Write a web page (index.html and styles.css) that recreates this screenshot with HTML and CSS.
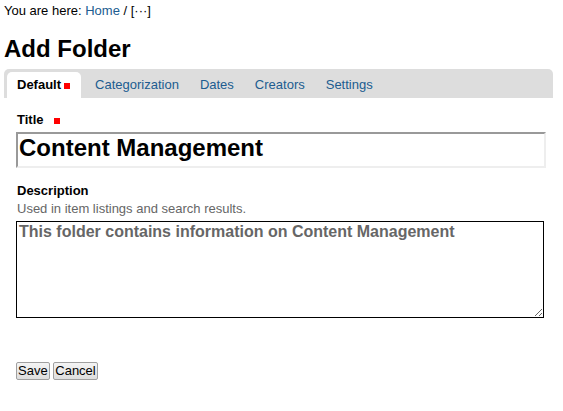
FILE: index.html
```html
<!DOCTYPE html>
<html lang="en">
<head>
    <meta charset="UTF-8">
    <meta name="viewport" content="width=device-width, initial-scale=1.0">
    <title>Add Folder</title>
    <link rel="stylesheet" href="styles.css">
</head>
<body>
    <div class="breadcrumbs">
        You are here: <a href="#">Home</a> / [&middot;&middot;&middot;]
    </div>

    <h1>Add Folder</h1>

    <ul class="tabs">
        <li class="tab active">Default<span class="required"></span></li>
        <li class="tab"><a href="#">Categorization</a></li>
        <li class="tab"><a href="#">Dates</a></li>
        <li class="tab"><a href="#">Creators</a></li>
        <li class="tab"><a href="#">Settings</a></li>
    </ul>

    <form class="edit-form">
        <div class="field">
            <label class="field-label" for="title">Title <span class="required"></span></label>
            <input type="text" id="title" class="title-input" value="Content Management">
        </div>

        <div class="field field-desc">
            <label class="field-label" for="description">Description</label>
            <div class="field-help">Used in item listings and search results.</div>
            <textarea id="description" class="desc-input">This folder contains information on Content Management</textarea>
        </div>

        <!-- Form buttons -->
        <div class="buttons">
            <button type="button">Save</button>
            <button type="button">Cancel</button>
        </div>
    </form>
</body>
</html>
```

FILE: styles.css
```css
body {
    font-family: "Liberation Sans", Arial, sans-serif;
    font-size: 13px;
    color: #000;
    margin: 0;
    padding: 2px 4px 0;
    background-color: #fff;
}
a {
    color: #205c90;
    text-decoration: none;
}
.breadcrumbs {
    line-height: 18px;
}
h1 {
    font-size: 24px;
    line-height: 28px;
    margin: 15px 0 6px;
}
.tabs {
    list-style: none;
    margin: 0 6px 0 0;
    padding: 3px 0 0 3px;
    height: 26px;
    background: #dddddd;
    border-radius: 5px 5px 0 0;
    display: flex;
}
.tab {
    line-height: 26px;
    padding: 0 10px;
    margin-right: 1px;
}
.tab.active {
    background: #fff;
    font-weight: bold;
    border-radius: 5px 5px 0 0;
    padding-right: 11px;
    margin-right: 4px;
}
.required {
    display: inline-block;
    width: 6px;
    height: 6px;
    background: #f00;
    margin-left: 3px;
    vertical-align: 0;
}
.edit-form {
    padding: 0 12px;
}
.field {
    margin-top: 14px;
}
.field-desc {
    margin-top: 15px;
}
.field-label {
    display: block;
    font-weight: bold;
    line-height: 16px;
    padding-left: 1px;
}
.field-label .required {
    margin-left: 7px;
}
.field-help {
    color: #666;
    line-height: 18px;
    margin-top: 1px;
    padding-left: 1px;
}
.title-input {
    display: block;
    box-sizing: border-box;
    width: 530px;
    height: 36px;
    margin-top: 4px;
    padding: 0 2px 4px 1px;
    border: 2px solid;
    border-color: #999 #eee #eee #999;
    font-family: "Liberation Sans", Arial, sans-serif;
    font-size: 24px;
    font-weight: bold;
    color: #000;
}
.desc-input {
    display: block;
    box-sizing: border-box;
    width: 528px;
    height: 97px;
    margin-top: 3px;
    padding: 1px 2px;
    border: 1px solid #000;
    font-family: "Liberation Sans", Arial, sans-serif;
    font-size: 16px;
    font-weight: bold;
    color: #666;
}
.buttons {
    margin-top: 44px;
}
button {
    font-family: "Liberation Sans", Arial, sans-serif;
    font-size: 13px;
    height: 18px;
    padding: 0 1px;
    margin: 0;
    border: 1px solid #a0a0a0;
    border-radius: 2px;
    background: linear-gradient(#f4f4f4, #dedede);
    color: #000;
    line-height: 16px;
}
```
